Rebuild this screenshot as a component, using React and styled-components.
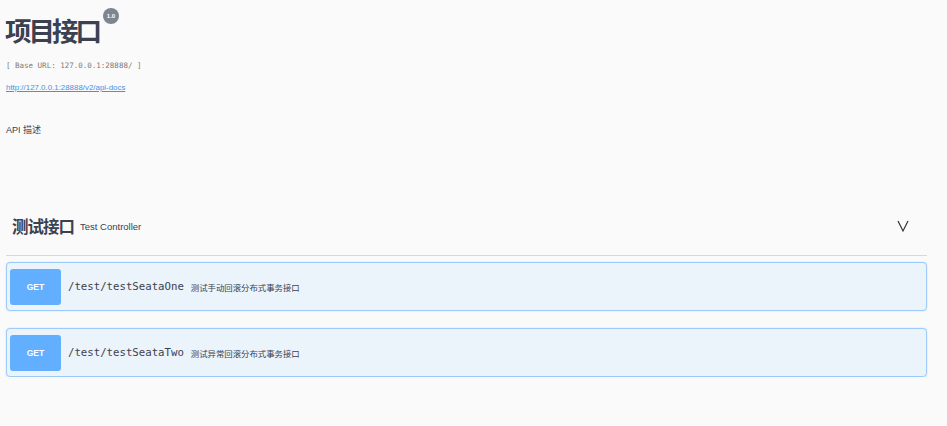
import React from 'react';
import styled, { createGlobalStyle } from 'styled-components';

const GlobalStyle = createGlobalStyle`
  body {
    margin: 0;
    background: #fafafa;
    font-family: "Liberation Sans", "Noto Sans CJK SC", sans-serif;
    color: #3b4151;
  }
`;

const operations = [
  { method: 'GET', path: '/test/testSeataOne', summary: '测试手动回滚分布式事务接口' },
  { method: 'GET', path: '/test/testSeataTwo', summary: '测试异常回滚分布式事务接口' },
];

const Page = styled.div`
  padding: 0 20px 0 6px;
`;

const Info = styled.div`
  display: flex;
  flex-direction: column;
  align-items: flex-start;
`;

const TitleRow = styled.div`
  display: flex;
  align-items: flex-start;
  margin-top: 10px;
`;

const Title = styled.h2`
  margin: 0 0 0 -1px;
  font-family: "Noto Sans CJK SC", sans-serif;
  font-size: 26.5px;
  line-height: 40px;
  font-weight: 700;
  letter-spacing: -3px;
  color: #3b4151;
`;

const Version = styled.span`
  display: flex;
  align-items: center;
  justify-content: center;
  width: 16px;
  height: 16px;
  margin: -2px 0 0 4px;
  border-radius: 50%;
  background: #7d8492;
  color: #fff;
  font-family: "Liberation Sans", sans-serif;
  font-size: 6px;
  font-weight: 700;
`;

const BaseUrl = styled.pre`
  margin: 10px 0 0;
  font-family: "DejaVu Sans Mono", "Liberation Mono", monospace;
  font-size: 7.5px;
  line-height: 12px;
  color: #7a7a7a;
`;

const DocLink = styled.a`
  margin-top: 10px;
  font-size: 7.9px;
  line-height: 12px;
  color: #4990e2;
  text-decoration: underline;
`;

const Description = styled.p`
  margin: 30px 0 0;
  font-size: 9px;
  line-height: 12px;
  color: #3b4151;
`;

const TagSection = styled.section`
  margin-top: 65px;
`;

const TagHeader = styled.div`
  display: flex;
  align-items: center;
  height: 50px;
  padding: 0 18px 4px 6px;
  border-bottom: 1px solid #d9d9d9;
`;

const TagName = styled.h4`
  margin: 0;
  font-family: "Noto Sans CJK SC", sans-serif;
  font-size: 16.5px;
  font-weight: 700;
  letter-spacing: -1px;
  color: #3b4151;
`;

const TagDesc = styled.small`
  flex: 1;
  margin-left: 6px;
  font-size: 9.5px;
  color: #3b4151;
`;

const Chevron = styled.svg`
  width: 12px;
  height: 14px;
`;

const Operations = styled.div`
  display: flex;
  flex-direction: column;
  gap: 17px;
  margin-top: 6px;
`;

const OpBlock = styled.div`
  display: flex;
  align-items: center;
  height: 47px;
  padding: 0 3px;
  border: 1px solid #9ccbf9;
  border-radius: 4px;
  background: #ebf3fb;
  box-shadow: 0 0 2px rgba(97, 175, 254, 0.35);
`;

const Method = styled.span`
  display: flex;
  align-items: center;
  justify-content: center;
  width: 51px;
  height: 36px;
  border-radius: 3px;
  background: #61affe;
  color: #fff;
  font-size: 8.5px;
  font-weight: 700;
`;

const Path = styled.span`
  margin-left: 7px;
  font-family: "DejaVu Sans Mono", "Liberation Mono", monospace;
  font-size: 10.7px;
  color: #3b4151;
`;

const Summary = styled.span`
  margin-left: 7px;
  font-family: "Noto Sans CJK SC", sans-serif;
  font-size: 8.4px;
  color: #3b4151;
`;

export default function App() {
  return (
    <Page>
      <GlobalStyle />
      <Info>
        <TitleRow>
          <Title>项目接口</Title>
          <Version>1.0</Version>
        </TitleRow>
        <BaseUrl>[ Base URL: 127.0.0.1:28888/ ]</BaseUrl>
        <DocLink href="#">http://127.0.0.1:28888/v2/api-docs</DocLink>
        <Description>API 描述</Description>
      </Info>
      <TagSection>
        <TagHeader>
          <TagName>测试接口</TagName>
          <TagDesc>Test Controller</TagDesc>
          <Chevron viewBox="0 0 12 14">
            <polyline points="1,2 6,12 11,2" fill="none" stroke="#333" strokeWidth="1.2" />
          </Chevron>
        </TagHeader>
        <Operations>
          {operations.map((op) => (
            <OpBlock key={op.path}>
              <Method>{op.method}</Method>
              <Path>{op.path}</Path>
              <Summary>{op.summary}</Summary>
            </OpBlock>
          ))}
        </Operations>
      </TagSection>
    </Page>
  );
}
